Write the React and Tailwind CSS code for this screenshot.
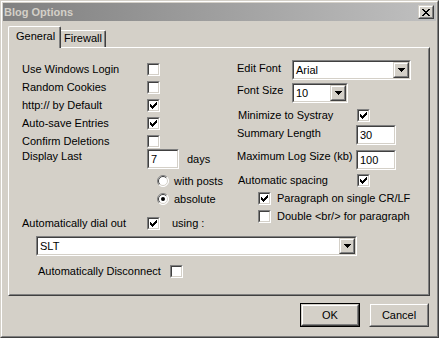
import React from "react";

function Sunken({ className = "", children, inner = "" }) {
  return (
    <div className={`border border-t-[#808080] border-l-[#808080] border-b-white border-r-white ${className}`}>
      <div className={`h-full w-full border border-t-[#404040] border-l-[#404040] border-b-[#d4d0c8] border-r-[#d4d0c8] bg-white ${inner}`}>
        {children}
      </div>
    </div>
  );
}

function Raised({ className = "", children, inner = "" }) {
  return (
    <div className={`border border-t-[#d4d0c8] border-l-[#d4d0c8] border-b-[#404040] border-r-[#404040] ${className}`}>
      <div className={`h-full w-full border border-t-white border-l-white border-b-[#808080] border-r-[#808080] bg-[#d4d0c8] ${inner}`}>
        {children}
      </div>
    </div>
  );
}

function Check({ checked }) {
  return (
    <Sunken className="w-[13px] h-[13px] shrink-0" inner="flex items-center justify-center">
      {checked && (
        <svg width="7" height="7" viewBox="0 0 7 7" shapeRendering="crispEdges">
          <rect x="6" y="0" width="1" height="1" fill="#000" />
          <rect x="5" y="1" width="2" height="1" fill="#000" />
          <rect x="0" y="2" width="1" height="1" fill="#000" />
          <rect x="4" y="2" width="3" height="1" fill="#000" />
          <rect x="0" y="3" width="2" height="1" fill="#000" />
          <rect x="3" y="3" width="3" height="1" fill="#000" />
          <rect x="0" y="4" width="5" height="1" fill="#000" />
          <rect x="1" y="5" width="3" height="1" fill="#000" />
          <rect x="2" y="6" width="1" height="1" fill="#000" />
        </svg>
      )}
    </Sunken>
  );
}

function Radio({ checked }) {
  return (
    <svg width="12" height="12" viewBox="0 0 12 12" className="shrink-0">
      <circle cx="6" cy="6" r="5.5" fill="#fff" />
      <path d="M2.1 9.9 A5.5 5.5 0 0 1 9.9 2.1" stroke="#808080" fill="none" />
      <path d="M9.9 2.1 A5.5 5.5 0 0 1 2.1 9.9" stroke="#fff" fill="none" />
      <path d="M2.8 9.2 A4.5 4.5 0 0 1 9.2 2.8" stroke="#404040" fill="none" />
      <path d="M9.2 2.8 A4.5 4.5 0 0 1 2.8 9.2" stroke="#d4d0c8" fill="none" />
      {checked && <circle cx="6" cy="6" r="2" fill="#000" />}
    </svg>
  );
}

function DropBtn() {
  return (
    <Raised className="w-[16px] h-full shrink-0" inner="flex items-center justify-center">
      <svg width="7" height="4" viewBox="0 0 7 4" shapeRendering="crispEdges">
        <rect x="0" y="0" width="7" height="1" fill="#000" />
        <rect x="1" y="1" width="5" height="1" fill="#000" />
        <rect x="2" y="2" width="3" height="1" fill="#000" />
        <rect x="3" y="3" width="1" height="1" fill="#000" />
      </svg>
    </Raised>
  );
}

function Combo({ className = "", value }) {
  return (
    <Sunken className={`h-[20px] shrink-0 ${className}`} inner="flex items-stretch">
      <span className="flex-1 pl-[2px] flex items-center">{value}</span>
      <DropBtn />
    </Sunken>
  );
}

function Field({ className = "", value }) {
  return (
    <Sunken className={`h-[20px] shrink-0 ${className}`} inner="flex items-center pl-[2px]">
      <span>{value}</span>
    </Sunken>
  );
}

function CheckRow({ label, checked, w = "w-[125px]" }) {
  return (
    <div className="h-[18px] flex items-center">
      <span className={`${w} shrink-0`}>{label}</span>
      <Check checked={checked} />
    </div>
  );
}

export default function App() {
  return (
    <div className="w-[439px] h-[338px] bg-[#d4d0c8] border border-t-[#d4d0c8] border-l-[#d4d0c8] border-b-[#404040] border-r-[#404040] font-['Liberation_Sans',Arial,sans-serif] text-[11px] leading-[13px] text-black">
      <div className="h-full w-full border border-t-white border-l-white border-b-[#808080] border-r-[#808080] p-px flex flex-col">
        {/* Title bar */}
        <div className="h-[18px] shrink-0 flex items-center justify-between bg-linear-to-r from-[#808080] to-[#c0c0c0] pl-px pr-[2px]">
          <span className="font-bold text-[#d4d0c8]">Blog Options</span>
          <Raised className="w-[16px] h-[14px]" inner="flex items-center justify-center">
            <svg width="8" height="7" viewBox="0 0 8 7" shapeRendering="crispEdges">
              <rect x="0" y="0" width="2" height="1" fill="#000" />
              <rect x="6" y="0" width="2" height="1" fill="#000" />
              <rect x="1" y="1" width="2" height="1" fill="#000" />
              <rect x="5" y="1" width="2" height="1" fill="#000" />
              <rect x="2" y="2" width="4" height="1" fill="#000" />
              <rect x="3" y="3" width="2" height="1" fill="#000" />
              <rect x="2" y="4" width="4" height="1" fill="#000" />
              <rect x="1" y="5" width="2" height="1" fill="#000" />
              <rect x="5" y="5" width="2" height="1" fill="#000" />
              <rect x="0" y="6" width="2" height="1" fill="#000" />
              <rect x="6" y="6" width="2" height="1" fill="#000" />
            </svg>
          </Raised>
        </div>

        {/* Tabs */}
        <div className="h-[26px] shrink-0 ml-[5px] flex items-end">
          <div className="relative z-10 -mb-px h-[22px] w-[53px] bg-[#d4d0c8] border-t border-l border-r border-t-white border-l-white border-r-[#404040] rounded-t-[2px]">
            <div className="h-full border-r border-r-[#808080] pl-[7px] pt-[3px]">General</div>
          </div>
          <div className="h-[17px] w-[45px] bg-[#d4d0c8] border-t border-r border-t-white border-r-[#404040] rounded-tr-[2px]">
            <div className="h-full border-r border-r-[#808080] pl-[3px] pt-[1px]">Firewall</div>
          </div>
        </div>

        {/* Panel */}
        <div className="ml-[5px] w-[422px] h-[249px] shrink-0 border border-t-white border-l-white border-b-[#404040] border-r-[#404040]">
          <div className="h-full w-full border border-t-[#d4d0c8] border-l-[#d4d0c8] border-b-[#808080] border-r-[#808080] pt-[11px] pl-[12px] flex items-start">
            {/* Left column */}
            <div className="w-[215px] shrink-0 flex flex-col">
              <CheckRow label="Use Windows Login" checked={false} />
              <CheckRow label="Random Cookies" checked={false} />
              <CheckRow label="http:// by Default" checked={true} />
              <CheckRow label="Auto-save Entries" checked={true} />
              <CheckRow label="Confirm Deletions" checked={false} />
              <div className="-mt-px h-[20px] flex items-start">
                <span className="w-[125px] shrink-0 pt-[1px]">Display Last</span>
                <Field className="w-[32px]" value="7" />
                <span className="ml-[8px] pt-[4px]">days</span>
              </div>
              <div className="mt-[3px] ml-[135px] h-[18px] flex items-center gap-[5px]">
                <Radio checked={false} />
                <span>with posts</span>
              </div>
              <div className="ml-[135px] h-[18px] flex items-center gap-[5px]">
                <Radio checked={true} />
                <span>absolute</span>
              </div>
              <div className="mt-[6px] h-[18px] flex items-center">
                <span className="w-[125px] shrink-0">Automatically dial out</span>
                <Check checked={true} />
                <span className="ml-[12px]">using :</span>
              </div>
              <Combo className="mt-[4px] ml-[14px] w-[321px]" value="SLT" />
              <div className="mt-[6px] ml-[16px] h-[18px] flex items-center">
                <span className="w-[132px] shrink-0">Automatically Disconnect</span>
                <Check checked={false} />
              </div>
            </div>

            {/* Right column */}
            <div className="flex flex-col">
              <div className="h-[20px] flex items-start">
                <span className="w-[55px] shrink-0 pt-[2px]">Edit Font</span>
                <Combo className="w-[119px]" value="Arial" />
              </div>
              <div className="mt-[3px] h-[20px] flex items-start">
                <span className="w-[55px] shrink-0 pt-[1px]">Font Size</span>
                <Combo className="w-[56px]" value="10" />
              </div>
              <div className="mt-[3px] h-[18px] flex items-center">
                <span className="w-[120px] shrink-0 pl-px">Minimize to Systray</span>
                <Check checked={true} />
              </div>
              <div className="mt-px h-[20px] flex items-start">
                <span className="w-[119px] shrink-0 pt-[2px]">Summary Length</span>
                <Field className="w-[40px]" value="30" />
              </div>
              <div className="mt-[5px] h-[20px] flex items-start">
                <span className="w-[119px] shrink-0">Maximum Log Size (kb)</span>
                <Field className="w-[40px]" value="100" />
              </div>
              <div className="mt-px h-[18px] flex items-center">
                <span className="w-[120px] shrink-0 pl-px">Automatic spacing</span>
                <Check checked={true} />
              </div>
              <div className="ml-[21px] h-[18px] flex items-center gap-[6px]">
                <Check checked={true} />
                <span>Paragraph on single CR/LF</span>
              </div>
              <div className="ml-[21px] h-[18px] flex items-center gap-[6px]">
                <Check checked={false} />
                <span>{"Double <br/> for paragraph"}</span>
              </div>
            </div>
          </div>
        </div>

        {/* Buttons */}
        <div className="mt-[7px] pr-[7px] flex justify-end gap-[9px]">
          <div className="w-[60px] h-[24px] border border-black">
            <Raised className="w-full h-full" inner="flex items-center justify-center">
              <span>OK</span>
            </Raised>
          </div>
          <Raised className="w-[60px] h-[24px]" inner="flex items-center justify-center">
            <span>Cancel</span>
          </Raised>
        </div>
      </div>
    </div>
  );
}
